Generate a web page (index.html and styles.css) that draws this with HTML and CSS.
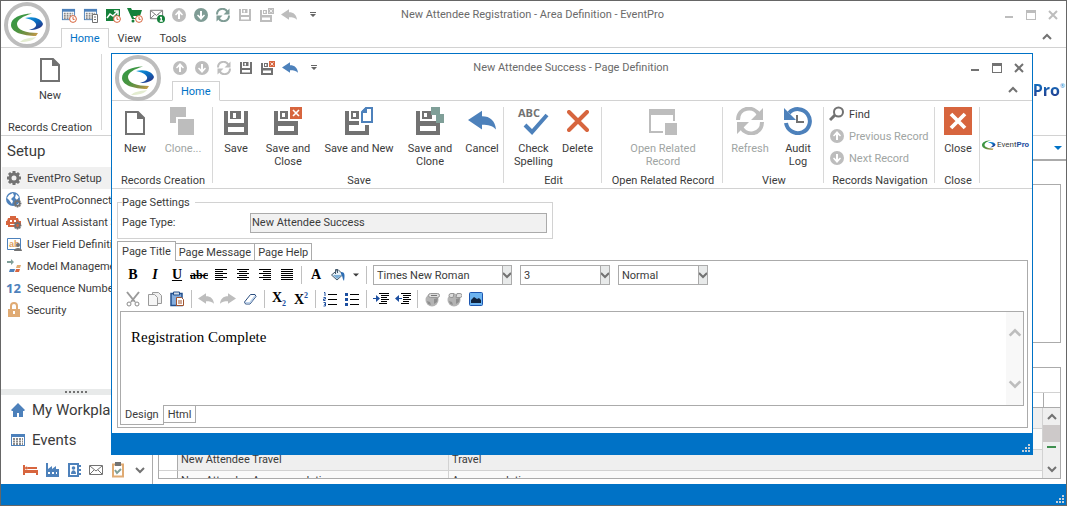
FILE: index.html
```html
<!DOCTYPE html>
<html lang="en">
<head>
    <meta charset="UTF-8">
    <meta name="viewport" content="width=device-width, initial-scale=1.0">
    <title>New Attendee Registration - Area Definition - EventPro</title>
    <link rel="stylesheet" href="styles.css">
</head>
<body>
    <!-- icon sprite -->
    <svg class="sprite" aria-hidden="true">
        <defs>
            <linearGradient id="green" x1="0" y1="0" x2="1" y2="1">
                <stop offset="0" stop-color="#2f9a48"/>
                <stop offset="0.5" stop-color="#4a9440"/>
                <stop offset="0.8" stop-color="#8c8f45"/>
                <stop offset="1" stop-color="#d8a04a"/>
            </linearGradient>
            <linearGradient id="blue" x1="0" y1="0" x2="0.8" y2="1">
                <stop offset="0" stop-color="#12a0e0"/>
                <stop offset="0.5" stop-color="#0a6cc0"/>
                <stop offset="1" stop-color="#2a2f80"/>
            </linearGradient>
        </defs>
        <symbol id="swoosh" viewBox="7 10 33 25">
            <path fill="url(#green)" d="M28 11.500C16 12 7 16 7 23c0 7 12 11 25 11l2-3C22 31 13 28 13 22c0-4 6-8 15-10.500z"/>
            <path fill="url(#blue)" d="M21 16c9-2.500 17 1 18 6-1 4-7 6-14 6 4-1 8-3 7-6-1-3-6-5-11-6z"/>
        </symbol>
        <symbol id="app" viewBox="0 0 46 46">
            <circle cx="23" cy="23" r="21" fill="#fff" stroke="#bdbdbd" stroke-width="4"/>
            <path fill="#e3ecd0" d="M16 40c3-3 8-4 16-5-2 3-8 5-16 5z"/>
            <path fill="url(#green)" d="M28 11.500C16 12 7 16 7 23c0 7 12 11 25 11l2-3C22 31 13 28 13 22c0-4 6-8 15-10.500z"/>
            <path fill="url(#blue)" d="M21 16c9-2.500 17 1 18 6-1 4-7 6-14 6 4-1 8-3 7-6-1-3-6-5-11-6z"/>
        </symbol>
        <symbol id="clock" viewBox="0 0 8 8">
            <circle cx="4" cy="4" r="3.400" fill="#fff" stroke="#d7653e"/>
            <path d="M4 2v2.400h1.600" fill="none" stroke="#d7653e"/>
        </symbol>
        <symbol id="calendar" viewBox="0 0 16 16">
            <path fill="#4d81bb" d="M1 2h14v12H1z"/>
            <path fill="#fff" d="M2 5h12v8H2z"/>
            <path stroke="#8b8b8b" stroke-width="2" stroke-dasharray="2 1" d="M3 7h10M3 9.500h10M3 12h10"/>
        </symbol>
        <symbol id="cal-clock" viewBox="0 0 16 16">
            <use href="#calendar" width="15" height="15"/>
            <use href="#clock" x="8" y="8" width="8" height="8"/>
        </symbol>
        <symbol id="cal-doc" viewBox="0 0 16 16">
            <use href="#calendar" width="15" height="15"/>
            <path fill="#fff" stroke="#727272" d="M9.500 7.500h5v8h-5z"/>
            <path stroke="#727272" d="M11 10h2M11 12.500h2"/>
        </symbol>
        <symbol id="chart-clock" viewBox="0 0 16 16">
            <path fill="#15803a" d="M1 2h14v12H1z"/>
            <path fill="none" stroke="#fff" stroke-width="1.500" d="M2 11l3-4 3 2 4-4M9 4h4v4"/>
            <use href="#clock" x="8" y="8" width="8" height="8"/>
        </symbol>
        <symbol id="cart-clock" viewBox="0 0 16 16">
            <path fill="#15803a" d="M0 1h4l1 2h10l-2 6H6l1 2h6v1H5z"/>
            <circle cx="6" cy="14" r="1.500" fill="#15803a"/>
            <use href="#clock" x="8" y="8" width="8" height="8"/>
        </symbol>
        <symbol id="mail" viewBox="0 0 16 16">
            <path fill="#fff" stroke="#727272" d="M1.500 3.500h13v9h-13zM2 4l6 5 6-5M2 12l4-4M14 12l-4-4"/>
        </symbol>
        <symbol id="mail-badge" viewBox="0 0 16 16">
            <use href="#mail" width="15" height="15"/>
            <circle cx="12" cy="12" r="4" fill="#15803a"/>
            <path stroke="#fff" stroke-width="1.300" fill="none" d="M11 10.500h1.300V14M10.800 14h3"/>
        </symbol>
        <symbol id="up" viewBox="0 0 16 16">
            <circle cx="8" cy="8" r="7" fill="currentColor"/>
            <path fill="#fff" d="M8 3l4 4.500-1 1-2-1.700V12H7V6.800L5 8.500l-1-1z"/>
        </symbol>
        <symbol id="down" viewBox="0 0 16 16">
            <circle cx="8" cy="8" r="7" fill="currentColor"/>
            <path fill="#fff" d="M8 13l4-4.500-1-1-2 1.700V4H7v5.200L5 7.500l-1 1z"/>
        </symbol>
        <symbol id="refresh" viewBox="0 0 28 28">
            <path fill="none" stroke="currentColor" stroke-width="4" d="M2 13C2 0 18-2 23 8M26 15c0 13-16 15-21 5"/>
            <path fill="currentColor" d="M27 1v12H15zM1 27V15h12z"/>
        </symbol>
        <symbol id="save" viewBox="0 0 24 24">
            <path fill="currentColor" fill-rule="evenodd" d="M0 0h4v12h16V0h4v24H0zM4 16v5h16v-5zM6 0h11v8H6zM9 2v5h3V2z"/>
        </symbol>
        <symbol id="x-box" viewBox="0 0 12 12">
            <path fill="currentColor" d="M0 0h12v12H0z"/>
            <path stroke="#fff" stroke-width="1.600" d="M3 3l6 6M9 3l-6 6"/>
        </symbol>
        <symbol id="save-close" viewBox="0 0 28 28">
            <path fill="currentColor" fill-rule="evenodd" d="M0 4h4v10h20v14H0zM4 19v5h16v-5zM6 4h8v8H6zM8 6v4h3V6z"/>
            <use class="accent" href="#x-box" x="16" y="0" width="12" height="12"/>
        </symbol>
        <symbol id="save-new" viewBox="0 0 28 28">
            <path fill="currentColor" fill-rule="evenodd" d="M0 4h4v10h10v4H4v6h16v-6h4v10H0zM6 4h8v8H6zM8 6v4h3V6z"/>
            <path fill="#fff" stroke="#4d81bb" stroke-width="2" d="M17 5l4-4h6v14H17z"/>
            <path fill="#4d81bb" d="M17 6V4l4-4h1v6z"/>
        </symbol>
        <symbol id="save-clone" viewBox="0 0 28 28">
            <path fill="currentColor" fill-rule="evenodd" d="M0 4h4v10h20v14H0zM4 19v5h16v-5zM6 4h10v8H6zM8 6v4h3V6z"/>
            <path fill="#7f9f98" d="M15 0h9v8h-9zM20 7h9v9h-9z"/>
        </symbol>
        <symbol id="undo" viewBox="0 0 30 22">
            <path fill="currentColor" d="M0 10L15 0v6c9 0 14 5 15 14-4-4-8-5-15-5v5z"/>
        </symbol>
        <symbol id="doc" viewBox="0 0 20 24">
            <path fill="none" stroke="currentColor" stroke-width="2" d="M1 1h12l6 6v16H1z"/>
            <path fill="currentColor" d="M12 0l8 8h-8z"/>
        </symbol>
        <symbol id="clone" viewBox="0 0 26 28">
            <path fill="currentColor" d="M0 0h16v10H6v6H0zM8 12h16v16H8z"/>
        </symbol>
        <symbol id="cross" viewBox="0 0 22 22">
            <path stroke="currentColor" stroke-width="4" stroke-linecap="round" d="M2 2l18 18M20 2L2 20"/>
        </symbol>
        <symbol id="related" viewBox="0 0 28 28">
            <path fill="currentColor" d="M0 2h26v12h-2V8H2v16h12v2H0zM16 16h12v12H16z"/>
        </symbol>
        <symbol id="audit" viewBox="0 0 28 28">
            <path fill="none" stroke="#4d81bb" stroke-width="4" d="M5 6a12 12 0 1 1-3 10"/>
            <path fill="#4d81bb" d="M0 1v12h12z"/>
            <path fill="none" stroke="#727272" stroke-width="2" d="M13 8v7h7"/>
        </symbol>
        <symbol id="find" viewBox="0 0 16 16">
            <circle cx="9.500" cy="6" r="4.500" fill="none" stroke="currentColor" stroke-width="2"/>
            <path stroke="currentColor" stroke-width="3" d="M6 9l-5 5"/>
        </symbol>
        <symbol id="chevron-up" viewBox="0 0 12 12"><path fill="none" stroke="currentColor" stroke-width="2" d="M2 8l4-4 4 4"/></symbol>
        <symbol id="chevron-down" viewBox="0 0 12 12"><path fill="none" stroke="currentColor" stroke-width="2" d="M2 4l4 4 4-4"/></symbol>
        <symbol id="chevron-tight" viewBox="0 0 8 8"><path fill="none" stroke="currentColor" stroke-width="2" d="M0 2l4 4 4-4"/></symbol>
        <symbol id="more" viewBox="0 0 8 8"><path fill="currentColor" d="M1 1h6v1H1zM1 3h6L4 6z"/></symbol>
        <symbol id="caret" viewBox="0 0 8 8"><path fill="currentColor" d="M0 2h8L4 6z"/></symbol>
        <symbol id="min" viewBox="0 0 12 12"><path fill="currentColor" d="M2 7h8v2H2z"/></symbol>
        <symbol id="max" viewBox="0 0 12 12"><path fill="currentColor" fill-rule="evenodd" d="M1 1h10v10H1zM2 4v6h8V4z"/></symbol>
        <symbol id="close" viewBox="0 0 12 12"><path stroke="currentColor" stroke-width="2" d="M2 2l8 8M10 2l-8 8"/></symbol>
        <symbol id="gear" viewBox="0 0 16 16">
            <circle cx="8" cy="8" r="4" fill="none" stroke="currentColor" stroke-width="3"/>
            <path stroke="currentColor" stroke-width="3" d="M8 1v3M8 12v3M1 8h3M12 8h3M3 3l2 2M11 11l2 2M13 3l-2 2M5 11l-2 2"/>
        </symbol>
        <symbol id="globe" viewBox="0 0 16 16">
            <circle cx="7" cy="7" r="7" fill="#4d81bb"/>
            <path fill="#fff" d="M3 3l4-2 1 3-3 3 2 2-1 3-3-4-2-2zM10 2l3 3-2 3-2-2z"/>
            <use href="#gear" class="gray" x="7" y="7" width="9" height="9"/>
        </symbol>
        <symbol id="robot" viewBox="0 0 16 16">
            <path fill="#d7653e" d="M4 2h6v2h2l1 3h2v4h-2v2H2v-2H0V7h1l1-3h2z"/>
            <path fill="#fff" d="M4 6h2v2H4zM8 6h2v2H8zM4 10h5v1H4z"/>
            <use href="#gear" class="gray" x="7" y="7" width="9" height="9"/>
        </symbol>
        <symbol id="model" viewBox="0 0 16 16">
            <path fill="#7f9f98" d="M1 3h4V1l3 3-3 3V5H1z"/>
            <path fill="#4d81bb" d="M4 11h5l-1 3H3z"/>
            <path fill="#d7653e" d="M10 11h4l-1 3H9z"/>
            <path fill="#e0ab74" d="M11 7h4l-1 3h-4z"/>
        </symbol>
        <symbol id="lock" viewBox="0 0 16 16">
            <path fill="none" stroke="#e0ab74" stroke-width="2" d="M5 8V4a3 3 0 0 1 6 0v4"/>
            <path fill="#e0ab74" d="M2 7h12v8H2z"/><path fill="#fff" d="M7 9h2v3H7z"/>
        </symbol>
        <symbol id="home" viewBox="0 0 16 16">
            <path fill="#4d81bb" d="M8 1l7 7-1 1h-1v6H9v-4H7v4H3V9H2L1 8z"/>
        </symbol>
        <symbol id="bed" viewBox="0 0 16 16">
            <path fill="#d7653e" d="M1 3h2v5h13v5h-2v-2H3v2H1zM6 5h9v2H6z"/><circle cx="4.500" cy="6" r="1.500" fill="#d7653e"/>
        </symbol>
        <symbol id="factory" viewBox="0 0 16 16">
            <path fill="#4d81bb" fill-rule="evenodd" d="M2 1h2v6l4-3v3l4-3v3h3v8H2zM4 10v2h2v-2zM8 10v2h2v-2zM12 10v2h1v-2z"/>
        </symbol>
        <symbol id="contact" viewBox="0 0 16 16">
            <path fill="#fff" stroke="#4d81bb" stroke-width="2" d="M3 2h9v12H3z"/>
            <circle cx="7.500" cy="6" r="1.800" fill="#4d81bb"/>
            <path fill="#4d81bb" d="M5 12c0-5 5-5 5 0zM13 3h2v2h-2zM13 7h2v2h-2zM13 11h2v2h-2z"/>
        </symbol>
        <symbol id="task" viewBox="0 0 16 16">
            <path fill="#fff" stroke="#e0ab74" stroke-width="2" d="M3 2.500h10v12H3z"/>
            <path fill="#727272" d="M5 0h6v4H5z"/>
            <path fill="none" stroke="#7f9f98" stroke-width="2" d="M5 8l2 3 4-4"/>
        </symbol>
        <symbol id="left" viewBox="0 0 12 12"><path stroke="#000" d="M0 .5h12M0 2.500h8M0 4.500h12M0 6.500h8M0 8.500h12M0 10.500h8"/></symbol>
        <symbol id="center" viewBox="0 0 12 12"><path stroke="#000" d="M0 .5h12M2 2.500h8M0 4.500h12M2 6.500h8M0 8.500h12M2 10.500h8"/></symbol>
        <symbol id="right" viewBox="0 0 12 12"><path stroke="#000" d="M0 .5h12M4 2.500h8M0 4.500h12M4 6.500h8M0 8.500h12M4 10.500h8"/></symbol>
        <symbol id="justify" viewBox="0 0 12 12"><path stroke="#000" d="M0 .5h12M0 2.500h12M0 4.500h12M0 6.500h12M0 8.500h12M0 10.500h12"/></symbol>
        <symbol id="bucket" viewBox="0 0 16 16">
            <path fill="#e4eef5" stroke="#44596b" d="M1.500 8L8 2.500l5 5L7 13z"/>
            <path fill="#7fb0d8" d="M3 8h9l-5 4z"/>
            <path fill="none" stroke="#44596b" d="M5.500 7V2.500h2V6"/>
            <path fill="#2d6db3" d="M11 5c4 0 4 3 3 9-2-2-1-5-3-7z"/>
        </symbol>
        <symbol id="cut" viewBox="0 0 16 16">
            <path fill="none" stroke="#9a9a9a" stroke-width="2" d="M2 1l8 10M14 1L6 11"/>
            <circle cx="4" cy="13" r="2" fill="none" stroke="#8a8a8a"/><circle cx="12" cy="13" r="2" fill="none" stroke="#8a8a8a"/>
        </symbol>
        <symbol id="copy" viewBox="0 0 16 16">
            <path fill="#eee" stroke="#9a9a9a" d="M5.500 1.500h6l3 3v8h-9z"/>
            <path fill="#f6f6f6" stroke="#9a9a9a" d="M1.500 3.500h6l3 3v8h-9z"/>
        </symbol>
        <symbol id="paste" viewBox="0 0 16 16">
            <path fill="#86aede" stroke="#23508e" stroke-width="1.500" d="M2 2.500h11v12H2z"/>
            <path fill="#d4dde8" stroke="#23508e" d="M4.500 1h6v3h-6z"/>
            <path fill="#fff" stroke="#a0522d" d="M7.500 6.500h5l2 2v6h-7z"/><path stroke="#a0522d" d="M9 10h4M9 12h4"/>
        </symbol>
        <symbol id="eraser" viewBox="0 0 16 16">
            <path fill="#fff" stroke="#2d4f80" d="M2.500 11l6-7.500h4.500l1 2-6 7.500H3.500z"/><path fill="#b9d0ea" d="M3 11l1 1.500h4l5.500-7-1-1-5 6.500z"/>
        </symbol>
        <symbol id="ol" viewBox="0 0 16 16">
            <path stroke="#000" d="M6 3.500h9M6 8.500h9M6 13.500h9"/>
            <path fill="none" stroke="#1c4fa0" d="M2 1.500h1V5M1.500 6.500h2v1.500h-2v1.500h2M1.500 11.500h2V15h-2M2 13.300h1"/>
        </symbol>
        <symbol id="ul" viewBox="0 0 16 16">
            <path stroke="#000" d="M6 3.500h9M6 8.500h9M6 13.500h9"/>
            <path fill="#1c4fa0" d="M1 2h3v3H1zM1 7h3v3H1zM1 12h3v3H1z"/>
        </symbol>
        <symbol id="indent" viewBox="0 0 16 16">
            <path stroke="#000" d="M6 2.500h10M8 4.500h8M8 6.500h6M8 8.500h8M8 10.500h6M6 12.500h8"/>
            <path fill="#1c4fa0" d="M0 7h3V4l4 3.500L3 11V8H0z"/>
        </symbol>
        <symbol id="outdent" viewBox="0 0 16 16">
            <path stroke="#000" d="M6 2.500h10M8 4.500h8M8 6.500h6M8 8.500h8M8 10.500h6M6 12.500h8"/>
            <path fill="#1c4fa0" d="M7 7H4V4L0 7.500 4 11V8h3z"/>
        </symbol>
        <symbol id="link" viewBox="0 0 16 16">
            <circle cx="8" cy="9" r="6.500" fill="#b4b4b4"/><path fill="#8f8f8f" d="M3 10l3 1 1 3-3-1zM10 8l4-1-1 4-3 2z"/>
            <rect x="4.500" y="2.500" width="11" height="4" rx="2" fill="#ddd" stroke="#979797"/><path stroke="#777" d="M7 4.500h6"/>
        </symbol>
        <symbol id="unlink" viewBox="0 0 16 16">
            <circle cx="8" cy="9" r="6.500" fill="#b4b4b4"/><path fill="#8f8f8f" d="M3 10l3 1 1 3-3-1zM10 8l4-1-1 4-3 2z"/>
            <path fill="#ddd" stroke="#979797" d="M8 2.500H5a2 2 0 0 0 0 4h2zM11 2.500h3a2 2 0 0 1 0 4h-4z"/>
        </symbol>
        <symbol id="image" viewBox="0 0 16 16">
            <rect x="1.500" y="1.500" width="13" height="13" rx="1" fill="#6db4f0" stroke="#1c56b0"/>
            <path fill="#10243f" d="M3 12V9l3-3 3 2 2-1 2 2v3z"/>
        </symbol>
        <symbol id="grip" viewBox="0 0 8 8"><path fill="#c8d0d8" d="M6 0h2v2H6zM3 3h2v2H3zM6 3h2v2H6zM0 6h2v2H0zM3 6h2v2H3zM6 6h2v2H6z"/></symbol>
    </svg>

    <div class="window main-window">
        <svg class="app-logo"><use href="#app"/></svg>
        <header class="titlebar">
            <div class="quick">
                <button aria-label="Event calendar"><svg><use href="#cal-clock"/></svg></button>
                <button aria-label="Event list"><svg><use href="#cal-doc"/></svg></button>
                <button aria-label="Statistics"><svg><use href="#chart-clock"/></svg></button>
                <button aria-label="Orders"><svg><use href="#cart-clock"/></svg></button>
                <button aria-label="Messages"><svg><use href="#mail-badge"/></svg></button>
                <button aria-label="Previous" class="off"><svg><use href="#up"/></svg></button>
                <button aria-label="Next" class="teal"><svg><use href="#down"/></svg></button>
                <button aria-label="Refresh" class="teal"><svg class="s14"><use href="#refresh"/></svg></button>
                <button aria-label="Save" class="off"><svg class="s12"><use href="#save"/></svg></button>
                <button aria-label="Save and Close" class="off"><svg class="s14"><use href="#save-close"/></svg></button>
                <button aria-label="Undo" class="off"><svg><use href="#undo"/></svg></button>
                <button aria-label="Customize" class="customize"><svg class="s8"><use href="#more"/></svg></button>
            </div>
            <div class="title">New Attendee Registration - Area Definition - EventPro</div>
            <div class="controls off">
                <button aria-label="Minimize"><svg><use href="#min"/></svg></button>
                <button aria-label="Maximize"><svg><use href="#max"/></svg></button>
                <button aria-label="Close window"><svg><use href="#close"/></svg></button>
            </div>
        </header>
        <nav class="tabs">
            <button class="active">Home</button>
            <button>View</button>
            <button>Tools</button>
            <button class="collapse" aria-label="Collapse ribbon"><svg class="s12"><use href="#chevron-up"/></svg></button>
        </nav>
        <div class="ribbon">
            <section class="group wide">
                <div class="items">
                    <button class="big w40"><svg class="doc"><use href="#doc"/></svg>New</button>
                </div>
                <h2>Records Creation</h2>
            </section>
            <div class="brand large"><svg><use href="#swoosh"/></svg><span>Event<b>Pro</b><sup>®</sup></span></div>
        </div>
        <div class="workspace">
            <aside class="sidebar">
                <h1>Setup</h1>
                <ul class="setup-list">
                    <li class="selected"><a href="#"><svg class="gray"><use href="#gear"/></svg>EventPro Setup</a></li>
                    <li><a href="#"><svg><use href="#globe"/></svg>EventProConnect</a></li>
                    <li><a href="#"><svg><use href="#robot"/></svg>Virtual Assistant Setup</a></li>
                    <li><a href="#">
                        <svg viewBox="0 0 16 16">
                            <path fill="#fff" stroke="#4d81bb" d="M1.500 2.500h13v11h-13z"/>
                            <text x="3" y="11" class="field-text">ab</text>
                            <circle cx="12" cy="9" r="2" fill="#727272"/>
                            <path fill="#727272" d="M8 15c0-4 8-4 8 0z"/>
                        </svg>User Field Definitions</a></li>
                    <li><a href="#"><svg><use href="#model"/></svg>Model Management</a></li>
                    <li><a href="#"><span class="number">12</span>Sequence Numbers</a></li>
                    <li><a href="#"><svg><use href="#lock"/></svg>Security</a></li>
                </ul>
                <div class="splitter"></div>
                <a class="nav-link" href="#"><svg><use href="#home"/></svg>My Workplace</a>
                <a class="nav-link" href="#"><svg><use href="#calendar"/></svg>Events</a>
                <div class="nav-icons">
                    <button aria-label="Accommodation"><svg><use href="#bed"/></svg></button>
                    <button aria-label="Venues"><svg><use href="#factory"/></svg></button>
                    <button aria-label="Contacts"><svg><use href="#contact"/></svg></button>
                    <button aria-label="Mail"><svg><use href="#mail"/></svg></button>
                    <button aria-label="Tasks"><svg><use href="#task"/></svg></button>
                    <button aria-label="More" class="chev"><svg class="s12"><use href="#chevron-down"/></svg></button>
                </div>
            </aside>
            <main class="content">
                <div class="content-head"><svg class="s8"><use href="#caret"/></svg></div>
                <div class="panel"></div>
                <div class="grid-panel">
                    <div class="grid-tools"></div>
                    <div class="grid-header"></div>
                    <div class="grid-body">
                        <table>
                            <tr><td class="mark"></td><td></td><td></td></tr>
                            <tr><td class="mark"></td><td></td><td></td></tr>
                            <tr><td class="mark"></td><td>New Attendee Travel</td><td>Travel</td></tr>
                            <tr><td class="mark"></td><td>New Attendee Accommodation</td><td>Accommodation</td></tr>
                        </table>
                        <div class="scrollbar">
                            <svg class="s12"><use href="#chevron-up"/></svg>
                            <div class="thumb"></div>
                            <div class="marker"></div>
                            <svg class="s12"><use href="#chevron-down"/></svg>
                        </div>
                    </div>
                </div>
            </main>
        </div>
        <footer class="statusbar"><svg class="s8"><use href="#grip"/></svg></footer>
    </div>

    <div class="window dialog" role="dialog" aria-labelledby="dialog-title">
        <svg class="app-logo"><use href="#app"/></svg>
        <header class="titlebar">
            <div class="quick">
                <button aria-label="Previous" class="off"><svg><use href="#up"/></svg></button>
                <button aria-label="Next" class="off"><svg><use href="#down"/></svg></button>
                <button aria-label="Refresh" class="off"><svg class="s14"><use href="#refresh"/></svg></button>
                <button aria-label="Save" class="gray"><svg class="s12"><use href="#save"/></svg></button>
                <button aria-label="Save and Close" class="gray"><svg class="s14"><use href="#save-close"/></svg></button>
                <button aria-label="Undo" class="blue"><svg><use href="#undo"/></svg></button>
                <button aria-label="Customize" class="customize"><svg class="s8"><use href="#more"/></svg></button>
            </div>
            <div class="title" id="dialog-title">New Attendee Success - Page Definition</div>
            <div class="controls gray">
                <button aria-label="Minimize"><svg><use href="#min"/></svg></button>
                <button aria-label="Maximize"><svg><use href="#max"/></svg></button>
                <button aria-label="Close window"><svg><use href="#close"/></svg></button>
            </div>
        </header>
        <nav class="tabs">
            <button class="active">Home</button>
            <button class="collapse" aria-label="Collapse ribbon"><svg class="s12"><use href="#chevron-up"/></svg></button>
        </nav>
        <div class="ribbon">
            <section class="group">
                <div class="items">
                    <button class="big w40"><svg class="doc"><use href="#doc"/></svg>New</button>
                    <button class="big w56 off" disabled><svg><use href="#clone"/></svg>Clone...</button>
                </div>
                <h2>Records Creation</h2>
            </section>
            <section class="group">
                <div class="items">
                    <button class="big w40"><svg class="disk"><use href="#save"/></svg>Save</button>
                    <button class="big w64"><svg><use href="#save-close"/></svg>Save and Close</button>
                    <button class="big w78"><svg><use href="#save-new"/></svg>Save and New</button>
                    <button class="big w64"><svg><use href="#save-clone"/></svg>Save and Clone</button>
                    <button class="big w40 blue"><svg><use href="#undo"/></svg>Cancel</button>
                </div>
                <h2>Save</h2>
            </section>
            <section class="group edit">
                <div class="items">
                    <button class="big w48">
                        <svg viewBox="0 0 28 28">
                            <text x="-2" y="10" class="abc">ABC</text>
                            <path fill="none" stroke="#4d81bb" stroke-width="4" d="M5 18l7 7L27 8"/>
                        </svg>Check Spelling</button>
                    <button class="big w40 red"><svg class="cross"><use href="#cross"/></svg>Delete</button>
                </div>
                <h2>Edit</h2>
            </section>
            <section class="group related">
                <div class="items">
                    <button class="big w78 off" disabled><svg><use href="#related"/></svg>Open Related Record</button>
                </div>
                <h2>Open Related Record</h2>
            </section>
            <section class="group view">
                <div class="items">
                    <button class="big w48 off" disabled><svg><use href="#refresh"/></svg>Refresh</button>
                    <button class="big w48"><svg><use href="#audit"/></svg>Audit<br>Log</button>
                </div>
                <h2>View</h2>
            </section>
            <section class="group records">
                <div class="stack">
                    <button><svg class="gray"><use href="#find"/></svg>Find</button>
                    <button class="off" disabled><svg><use href="#up"/></svg>Previous Record</button>
                    <button class="off" disabled><svg><use href="#down"/></svg>Next Record</button>
                </div>
                <h2>Records Navigation</h2>
            </section>
            <section class="group">
                <div class="items">
                    <button class="big w40 red"><svg><use href="#x-box"/></svg>Close</button>
                </div>
                <h2>Close</h2>
            </section>
            <div class="brand"><svg><use href="#swoosh"/></svg><span>Event<b>Pro</b></span></div>
        </div>

        <form class="page-form">
            <fieldset>
                <legend>Page Settings</legend>
                <label for="page-type">Page Type:</label>
                <input id="page-type" type="text" value="New Attendee Success" readonly>
            </fieldset>

            <div class="page-tabs">
                <button type="button" class="active">Page Title</button>
                <button type="button">Page Message</button>
                <button type="button">Page Help</button>
            </div>
            <div class="page-panel">
                <div class="toolbar">
                    <button type="button" class="glyph"><b>B</b></button>
                    <button type="button" class="glyph"><b><i>I</i></b></button>
                    <button type="button" class="glyph"><b><u>U</u></b></button>
                    <button type="button" class="glyph strike"><s>abc</s></button>
                    <button type="button" aria-label="Align left"><svg class="s12"><use href="#left"/></svg></button>
                    <button type="button" aria-label="Center"><svg class="s12"><use href="#center"/></svg></button>
                    <button type="button" aria-label="Align right"><svg class="s12"><use href="#right"/></svg></button>
                    <button type="button" aria-label="Justify"><svg class="s12"><use href="#justify"/></svg></button>
                    <span class="sep"></span>
                    <button type="button" class="glyph"><b>A</b></button>
                    <button type="button" aria-label="Fill color"><svg><use href="#bucket"/></svg></button>
                    <button type="button" class="drop" aria-label="More colors"><svg class="s6"><use href="#caret"/></svg></button>
                    <span class="sep"></span>
                    <span class="select font"><select aria-label="Font"><option>Times New Roman</option></select><svg><use href="#chevron-tight"/></svg></span>
                    <span class="select"><select aria-label="Size"><option>3</option></select><svg><use href="#chevron-tight"/></svg></span>
                    <span class="select"><select aria-label="Paragraph style"><option>Normal</option></select><svg><use href="#chevron-tight"/></svg></span>
                </div>
                <div class="toolbar">
                    <button type="button" aria-label="Cut"><svg><use href="#cut"/></svg></button>
                    <button type="button" aria-label="Copy"><svg><use href="#copy"/></svg></button>
                    <button type="button" aria-label="Paste"><svg><use href="#paste"/></svg></button>
                    <span class="sep"></span>
                    <button type="button" class="off" aria-label="Undo typing"><svg><use href="#undo"/></svg></button>
                    <button type="button" class="off" aria-label="Redo typing"><svg class="flip"><use href="#undo"/></svg></button>
                    <button type="button" aria-label="Clear formatting"><svg><use href="#eraser"/></svg></button>
                    <span class="sep"></span>
                    <button type="button" class="glyph"><b>X<sub>2</sub></b></button>
                    <button type="button" class="glyph"><b>X<sup>2</sup></b></button>
                    <span class="sep"></span>
                    <button type="button" aria-label="Numbered list"><svg><use href="#ol"/></svg></button>
                    <button type="button" aria-label="Bulleted list"><svg><use href="#ul"/></svg></button>
                    <span class="sep"></span>
                    <button type="button" aria-label="Indent"><svg><use href="#indent"/></svg></button>
                    <button type="button" aria-label="Outdent"><svg><use href="#outdent"/></svg></button>
                    <span class="sep"></span>
                    <button type="button" aria-label="Insert link"><svg><use href="#link"/></svg></button>
                    <button type="button" aria-label="Remove link"><svg><use href="#unlink"/></svg></button>
                    <button type="button" aria-label="Insert image"><svg><use href="#image"/></svg></button>
                </div>
                <div class="editor">
                    <textarea aria-label="Page Title">Registration Complete</textarea>
                    <div class="editor-scroll">
                        <svg><use href="#chevron-up"/></svg>
                        <svg><use href="#chevron-down"/></svg>
                    </div>
                </div>
                <div class="editor-tabs">
                    <button type="button" class="active">Design</button>
                    <button type="button">Html</button>
                </div>
            </div>
        </form>
        <footer class="statusbar"><svg class="s8"><use href="#grip"/></svg></footer>
    </div>
</body>
</html>
```
FILE: styles.css
```css
* {
    box-sizing: border-box;
}
body {
    margin: 0;
    height: 100vh;
    overflow: hidden;
    font-family: Roboto, "Noto Sans", sans-serif;
    font-size: 11px;
    line-height: 13px;
    color: #3b3b3b;
}
button, input, select, textarea {
    font: inherit;
    color: inherit;
    margin: 0;
    padding: 0;
    border: 0;
    background: none;
}
h1, h2, ul {
    margin: 0;
    padding: 0;
    font-weight: normal;
    font-size: 11px;
}
a {
    color: inherit;
    text-decoration: none;
}
svg {
    width: 16px;
    height: 16px;
    flex: none;
}
.sprite {
    position: absolute;
    width: 0;
    height: 0;
}
.s6 { width: 6px; height: 6px; }
.s8 { width: 8px; height: 8px; }
.s12 { width: 12px; height: 12px; }
.s14 { width: 14px; height: 14px; }
.off { color: #bdbdbd; }
.gray { color: #727272; }
.teal { color: #7f9c95; }
.blue { color: #4d81bb; }
.red { color: #d7653e; }
.accent { color: var(--accent); }

/* windows */
.window {
    display: flex;
    flex-direction: column;
    background: #fff;
}
.main-window {
    --accent: #bdbdbd;
    height: 100%;
    position: relative;
    border: 1px solid #666;
}
.dialog {
    --accent: #d7653e;
    position: absolute;
    top: 53px;
    left: 111px;
    right: 34px;
    border: 1px solid #0072c6;
}
.app-logo {
    position: absolute;
    top: 1px;
    left: 3px;
    width: 46px;
    height: 46px;
}
.titlebar {
    display: grid;
    grid-template-columns: 1fr auto 1fr;
    align-items: center;
    height: 27px;
    flex: none;
    padding: 0 2px 0 57px;
}
.title {
    color: #6a6a6a;
    margin-right: 57px;
}
.quick, .controls {
    display: flex;
}
.quick button, .controls button, .toolbar button, .nav-icons button {
    display: flex;
    align-items: center;
    justify-content: center;
    width: 22px;
    height: 20px;
}
.quick .customize {
    width: 26px;
    color: #666;
}
.controls {
    justify-content: flex-end;
}
.controls svg {
    width: 12px;
    height: 12px;
}
.tabs {
    display: flex;
    height: 20px;
    flex: none;
    padding-left: 60px;
    border-bottom: 1px solid #d2d2d2;
}
.tabs button {
    height: 20px;
    padding: 0 8px;
    border: 1px solid transparent;
}
.tabs .active {
    color: #0072c6;
    background: #fff;
    border-color: #d2d2d2;
    border-bottom-color: #fff;
}
.tabs .collapse {
    margin-left: auto;
    margin-right: 4px;
    color: #727272;
}

/* ribbon */
.ribbon {
    display: flex;
    height: 88px;
    flex: none;
    border-bottom: 1px solid #d2d2d2;
}
.group {
    display: flex;
    flex-direction: column;
    margin: 6px 0 5px;
    padding: 0 1px 0 3px;
    border-right: 1px solid #d8d8d8;
}
.group h2 {
    margin-top: auto;
    margin-bottom: -5px;
    text-align: center;
    white-space: nowrap;
    line-height: 14px;
}
.items {
    display: flex;
    justify-content: center;
}
.wide {
    min-width: 101px;
    padding: 0 3px 0 1px;
}
.edit { min-width: 98px; }
.related { min-width: 121px; }
.view { min-width: 100px; }
.records { min-width: 111px; }
.big {
    display: flex;
    flex-direction: column;
    align-items: center;
    height: 64px;
}
.big svg {
    width: 28px;
    height: 28px;
    margin-bottom: 7px;
    overflow: visible;
}
.big .doc, .big .disk { padding-top: 4px; }
.big .cross { padding: 3px; }
.big, .stack button { color: #3b3b3b; }
.big svg { color: #727272; }
.big.off, .stack .off { color: #a0a5a3; }
.big.off svg, .stack .off svg { color: #bdbdbd; }
.big.blue svg { color: #4d81bb; }
.big.red svg { color: #d7653e; }
.w40 { width: 40px; }
.w48 { width: 48px; }
.w56 { width: 56px; }
.w64 { width: 64px; padding: 0 8px; }
.w78 { width: 78px; }
.abc {
    font: bold 11px "Open Sans", sans-serif;
    fill: #727272;
}
.stack {
    margin-top: -4px;
}
.stack button {
    display: flex;
    align-items: center;
    gap: 4px;
    height: 22px;
    margin-left: 2px;
    white-space: nowrap;
}
.brand {
    display: flex;
    align-items: center;
    gap: 1px;
    padding: 0 1px 0 2px;
    font-size: 8px;
}
.brand svg {
    width: 14px;
    height: 12px;
}
.brand b {
    color: #1c4fa0;
}
.large {
    margin-left: auto;
    font: 16px "Open Sans", sans-serif;
    padding-bottom: 4px;
}
.large svg {
    width: 40px;
    height: 30px;
}
.large b {
    background: linear-gradient(#0a80d0, #2a2f80);
    background-clip: text;
    color: transparent;
}
.large sup {
    font-size: 6px;
    vertical-align: 8px;
    color: #0a80d0;
}

/* main window body */
.workspace {
    display: flex;
    flex: 1;
    min-height: 0;
}
.sidebar {
    display: flex;
    flex-direction: column;
    width: 152px;
    flex: none;
    border-right: 1px solid #ababab;
}
.sidebar h1 {
    font-size: 15px;
    line-height: 31px;
    padding-left: 6px;
}
.setup-list {
    list-style: none;
    flex: 1;
    padding-left: 1px;
}
.setup-list a {
    display: flex;
    align-items: center;
    gap: 5px;
    height: 22px;
    padding-left: 4px;
    white-space: nowrap;
    overflow: hidden;
}
.setup-list .selected {
    background: #f0f0f0;
}
.number {
    width: 16px;
    font: bold 13px "Open Sans", sans-serif;
    color: #4d81bb;
}
.field-text {
    font: bold 9px "Liberation Sans", sans-serif;
    fill: #e0a060;
}
.splitter {
    height: 6px;
    background: #e8eaea;
    display: flex;
    align-items: center;
    justify-content: center;
}
.splitter::before {
    content: "";
    width: 23px;
    height: 2px;
    background: repeating-linear-gradient(90deg, #727272 0 2px, transparent 2px 4px);
}
.nav-link {
    display: flex;
    align-items: center;
    gap: 6px;
    height: 30px;
    padding-left: 9px;
    font-size: 15px;
    white-space: nowrap;
    overflow: hidden;
}
.nav-icons {
    display: flex;
    align-items: center;
    height: 29px;
    padding-left: 18px;
}
.chev, .scrollbar {
    color: #727272;
}
.content {
    display: flex;
    flex-direction: column;
    flex: 1;
    min-width: 0;
    padding-bottom: 5px;
}
.content-head {
    display: flex;
    align-items: center;
    justify-content: flex-end;
    height: 25px;
    flex: none;
    padding-right: 4px;
    border-bottom: 2px solid #ababab;
    color: #0072c6;
}
.panel {
    flex: 1;
    margin: 23px 5px 24px;
    border: 1px solid #ababab;
}
.grid-panel {
    height: 112px;
    flex: none;
    display: flex;
    flex-direction: column;
    margin: 0 5px;
    border: 1px solid #ababab;
}
.grid-tools {
    height: 25px;
    flex: none;
    border-bottom: 1px solid #d2d2d2;
}
.grid-header {
    height: 15px;
    flex: none;
    border-bottom: 1px solid #ababab;
    background: linear-gradient(#ababab, #ababab) right 16px top / 1px 100% no-repeat;
}
.grid-body {
    display: flex;
    flex: 1;
    min-height: 0;
    overflow: hidden;
}
.grid-body table {
    flex: 1;
    height: 84px;
    border-spacing: 0;
    table-layout: fixed;
}
.grid-body td {
    height: 21px;
    padding: 0 2px 1px 3px;
    border-right: 1px solid #d2d2d2;
    border-bottom: 1px solid #d2d2d2;
}
.grid-body td:nth-child(2) {
    width: 271px;
}
.grid-body .mark {
    width: 19px;
    background: #fff;
    border-right-color: #ababab;
}
.grid-body tr:nth-child(odd) {
    background: #efefef;
}
.grid-body tr:nth-child(even) {
    background: #fafafa;
}
.scrollbar {
    display: flex;
    flex-direction: column;
    align-items: center;
    width: 17px;
    height: 70px;
    padding: 3px 0;
    background: #efefef;
}
.thumb {
    width: 17px;
    height: 17px;
    margin-top: 2px;
    background: #cdc9c9;
}
.marker {
    width: 9px;
    height: 2px;
    margin: 4px 0 auto;
    background: #3f8f4f;
}
.statusbar {
    display: flex;
    align-items: flex-end;
    justify-content: flex-end;
    height: 21px;
    flex: none;
    padding: 2px;
    background: #0072c6;
}

/* page definition form */
.page-form {
    padding: 7px 4px 5px 5px;
}
fieldset {
    display: flex;
    align-items: center;
    width: 436px;
    height: 43px;
    margin: 0 0 2px;
    padding: 0 5px 2px 4px;
    border: 1px solid #d2d2d2;
}
legend {
    padding: 0 5px 0 0;
}
fieldset label {
    width: 128px;
}
fieldset input {
    flex: 1;
    height: 20px;
    padding: 0 1px;
    border: 1px solid #ababab;
    background: #f1f1f1;
}
.page-tabs, .editor-tabs {
    display: flex;
    align-items: flex-end;
}
.page-tabs button {
    height: 17px;
    padding: 0 3px;
    border: 1px solid #ababab;
    border-width: 1px 1px 0 0;
}
.page-tabs .active {
    height: 20px;
    padding: 0 4px;
    margin-bottom: -1px;
    border-left-width: 1px;
    background: #fff;
    position: relative;
}
.page-panel {
    border: 1px solid #ababab;
    padding: 2px 3px 2px 2px;
}
.toolbar {
    display: flex;
    align-items: center;
    height: 24px;
    padding-left: 2px;
}
.sep {
    width: 1px;
    height: 18px;
    margin: 0 3px;
    background: #c0c0c0;
}
.toolbar .glyph {
    font: 14px "Liberation Serif", serif;
    color: #000;
}
.toolbar .strike {
    font-size: 12px;
    font-weight: bold;
}
.glyph sub, .glyph sup {
    font-size: 8px;
    color: #1c4fa0;
}
.toolbar .drop {
    width: 14px;
}
.flip {
    transform: scaleX(-1);
}
.select {
    position: relative;
    width: 90px;
    height: 20px;
    margin-right: 8px;
    border: 1px solid #ababab;
}
.font {
    width: 139px;
    margin-left: 3px;
}
.select select {
    appearance: none;
    width: 100%;
    height: 18px;
    padding-left: 3px;
}
.select svg {
    position: absolute;
    top: 0;
    right: 0;
    width: 9px;
    height: 18px;
    border-left: 1px solid #ababab;
    background: #e8eaea;
    color: #727272;
    pointer-events: none;
}
.editor {
    display: flex;
    height: 95px;
    border: 1px solid #ababab;
}
.editor textarea {
    flex: 1;
    resize: none;
    outline: 0;
    padding: 17px 10px;
    font: 15px "Liberation Serif", serif;
    color: #000;
}
.editor-scroll {
    display: flex;
    flex-direction: column;
    align-items: center;
    justify-content: space-between;
    width: 17px;
    padding: 13px 0;
    background: #f8f8f8;
    color: #bdbdbd;
}
.editor-tabs {
    align-items: flex-start;
}
.editor-tabs button {
    height: 17px;
    padding: 0 4px;
    border: 1px solid #ababab;
    border-width: 0 1px 1px 0;
}
.editor-tabs .active {
    height: 20px;
    margin-top: -1px;
    border-left-width: 1px;
    background: #fff;
}
```
